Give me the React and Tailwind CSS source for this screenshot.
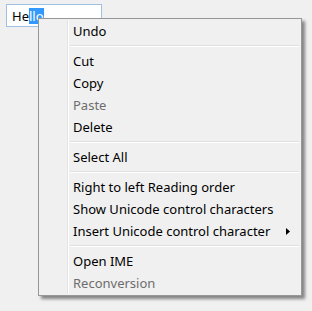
import React from "react";

const font = { fontFamily: '"Segoe UI", "Noto Sans", "Open Sans", sans-serif' };

function Item({ label, disabled, arrow }) {
  return (
    <div className="flex h-[22px] items-center pt-[1px]">
      <div className="w-[30px] shrink-0" />
      <div className={"flex-1 pl-[4px] text-[13px] leading-none " + (disabled ? "text-[#6d6d6d]" : "text-black")}>
        {label}
      </div>
      {arrow && (
        <svg width="4" height="7" viewBox="0 0 4 7" className="mr-[11px]">
          <path d="M0 0 L4 3.5 L0 7 Z" fill="#000" />
        </svg>
      )}
    </div>
  );
}

function Sep() {
  return (
    <div className="flex h-[8px] items-center">
      <div className="w-[31px] shrink-0" />
      <div className="mr-[2px] flex-1">
        <div className="h-px bg-[#e0e0e0]" />
        <div className="h-px bg-white" />
      </div>
    </div>
  );
}

export default function App() {
  return (
    <div className="relative h-[311px] w-[312px] overflow-hidden bg-[#f0f0f0]" style={font}>
      <div className="ml-[6px] pt-[4px]">
        <div className="relative h-[23px] w-[96px] border border-[#9fc0e2] bg-white">
          <div className="flex h-full items-center pl-[5px] pt-[1px] text-[13px] leading-none text-black">
            <span>He</span>
            <span className="flex h-[16px] items-center bg-[#3399ff] text-white">llo</span>
          </div>
        </div>
      </div>
      <div className="absolute left-[38px] top-[18px] w-[264px] border border-[#979797] bg-[#f0f0f0] py-[1px] shadow-[3px_3px_3px_rgba(0,0,0,0.45)]">
        <div className="absolute bottom-[1px] left-[28px] top-[1px] w-px bg-[#e2e3e3]" />
        <div className="absolute bottom-[1px] left-[29px] top-[1px] w-px bg-white" />
        <div className="relative">
          <Item label="Undo" />
          <Sep />
          <Item label="Cut" />
          <Item label="Copy" />
          <Item label="Paste" disabled />
          <Item label="Delete" />
          <Sep />
          <Item label="Select All" />
          <Sep />
          <Item label="Right to left Reading order" />
          <Item label="Show Unicode control characters" />
          <Item label="Insert Unicode control character" arrow />
          <Sep />
          <Item label="Open IME" />
          <Item label="Reconversion" disabled />
        </div>
      </div>
    </div>
  );
}
